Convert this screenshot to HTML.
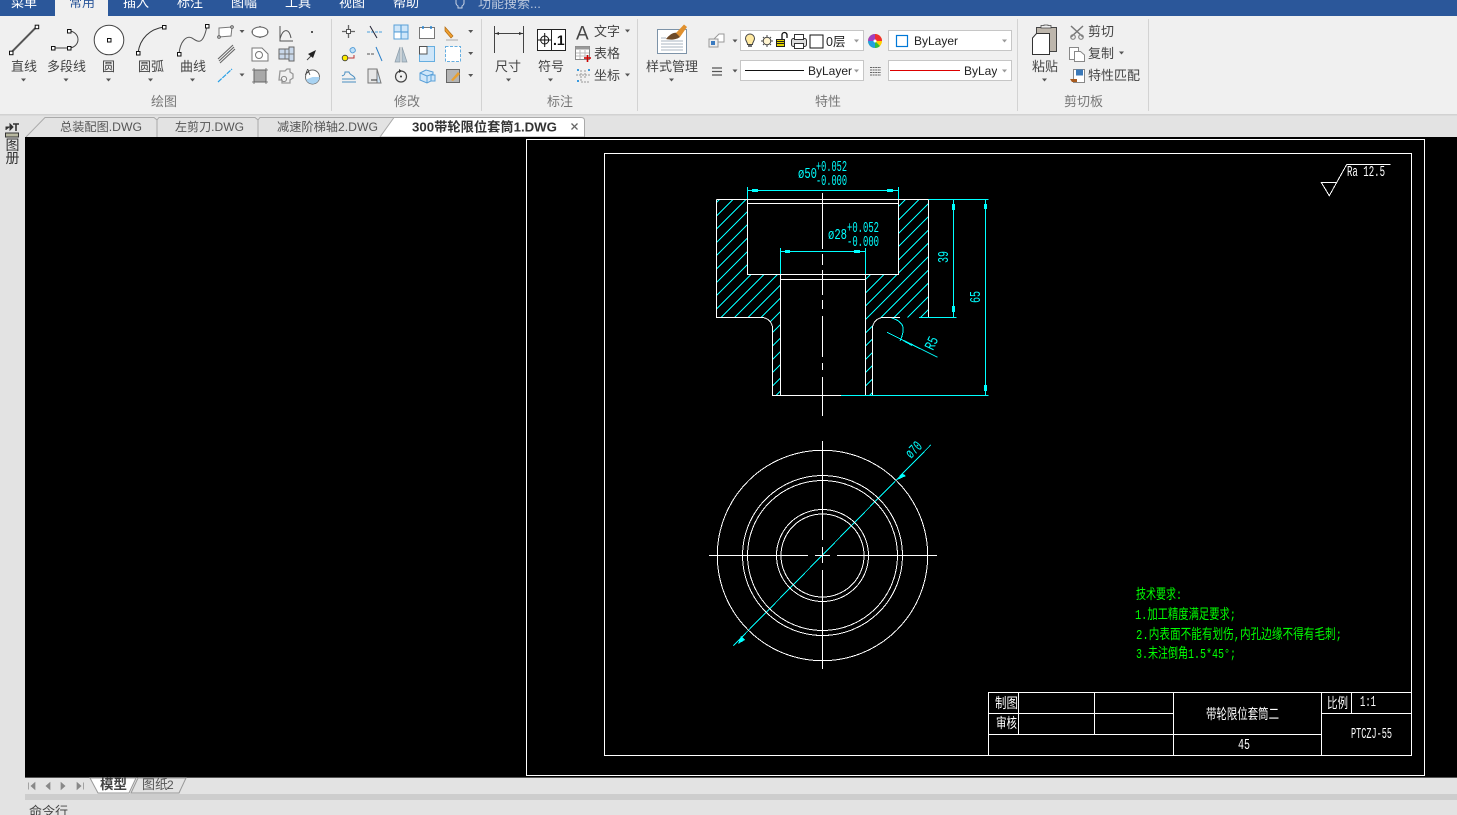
<!DOCTYPE html>
<html><head><meta charset="utf-8"><style>
html,body{margin:0;padding:0;background:#e3e3e3;overflow:hidden}
svg{display:block;position:absolute;left:0;top:0}
text{font-family:"Liberation Sans","Noto Sans CJK SC",sans-serif;font-size:13px;fill:#444}
.m{fill:#fff}
.l{fill:#777}
.c text{fill:#0ff;font-size:15px;font-family:"Liberation Mono",monospace}
.g text{fill:#0f0;font-size:14px;font-family:"Liberation Mono","Noto Sans CJK SC",monospace}
.w text{fill:#fff;font-size:14px}
.w text.n{font-family:"Liberation Mono",monospace;font-size:15px}
.i{fill:none;stroke:#555;stroke-width:1}
</style></head><body>
<svg width="1457" height="815" viewBox="0 0 1457 815" xmlns="http://www.w3.org/2000/svg">
<defs>
<path id="a" d="M-2.5-1.5h5l-2.500 3z" fill="#555"/>
<rect id="s" x="-1.500" y="-1.500" width="3.500" height="3.500" fill="#fff" stroke="#111"/>
<clipPath id="hc"><path d="M716.500 199.500H747.500V274.500H780.500V395.500H772.500V328A11 11 0 0 0 761.500 317.500H716.500ZM898.500 199.500H928.500V317.500H883.500A11 11 0 0 0 872.500 328V395.500H865.500V274.500H898.500Z"/></clipPath>
</defs>
<!-- base -->
<rect width="1457" height="815" fill="#e3e3e3"/>
<rect y="16" width="1457" height="98" fill="#f0f0f0"/>
<rect y="114" width="1457" height="1.500" fill="#d2d2d2"/>
<rect width="1457" height="16" fill="#2b579a"/>
<rect x="55" width="53" height="17" fill="#f0f0f0"/>
<g>
<text class="m" x="11" y="7">菜单</text>
<text x="69" y="7" style="fill:#2b579a">常用</text>
<text class="m" x="123" y="7">插入</text>
<text class="m" x="177" y="7">标注</text>
<text class="m" x="231" y="7">图幅</text>
<text class="m" x="285" y="7">工具</text>
<text class="m" x="339" y="7">视图</text>
<text class="m" x="393" y="7">帮助</text>
<text x="478" y="8" style="fill:#b9c6dc;font-size:13px">功能搜索...</text>
</g>
<path d="M456 0v2a4 4 0 0 0 2 4v2h4v-2a4 4 0 0 0 2-4v-2" fill="none" stroke="#c9d3e4"/>
<!-- separators -->
<path d="M331.500 19V111M481.500 19V111M637.500 19V111M1017.500 19V111M1148.500 19V111" stroke="#d3d3d3" stroke-width="1"/>
<!-- big draw icons -->
<path d="M11 52.700L36.700 26.700" stroke="#555" stroke-width="2"/>
<use href="#s" x="11" y="52.700"/><use href="#s" x="36.700" y="26.700"/>
<path d="M53 48H69M69 31A9 8.500 0 0 1 69 48" fill="none" stroke="#444"/>
<use href="#s" x="53" y="48"/><use href="#s" x="69" y="48"/><use href="#s" x="69" y="31"/>
<circle cx="109" cy="40" r="14.800" fill="#fff" stroke="#444"/><use href="#s" x="109" y="40"/>
<path d="M138 53C140 38 150 29 164 27" fill="none" stroke="#333"/>
<use href="#s" x="138" y="53"/><use href="#s" x="164" y="27"/>
<path d="M179 54C180 42 186 35 192 38C198 42 203 46 207 26" fill="none" stroke="#555"/>
<use href="#s" x="179" y="54"/><use href="#s" x="207" y="26"/>
<text x="11" y="71">直线</text><text x="47" y="71">多段线</text><text x="102" y="71">圆</text><text x="138" y="71">圆弧</text><text x="180" y="71">曲线</text>
<use href="#a" x="23.500" y="80"/><use href="#a" x="66" y="80"/><use href="#a" x="108.500" y="80"/><use href="#a" x="150.500" y="80"/><use href="#a" x="192.500" y="80"/>
<text class="l" x="151" y="106">绘图</text><text class="l" x="394" y="106">修改</text><text class="l" x="547" y="106">标注</text><text class="l" x="815" y="106">特性</text><text class="l" x="1064" y="106">剪切板</text>
<!-- draw small icons -->
<path d="M219 28L232 27L231 36L219 37Z" fill="#fff" stroke="#777"/><circle cx="219" cy="37" r="1.300" fill="#fff" stroke="#555"/><circle cx="232" cy="27" r="1.300" fill="#fff" stroke="#555"/>
<use href="#a" x="242" y="31.500"/>
<ellipse cx="260" cy="32" rx="8" ry="5" fill="#fff" stroke="#666"/><path d="M252 32h1M267 32h1M260 26v1M260 37v1" stroke="#444"/>
<path d="M280 26V41H293M280 39C283 28 289 28 291 38" class="i"/>
<rect x="311" y="31" width="2" height="2" fill="#555"/>
<path d="M218 59L233 45M219 61L234 47M220 63L235 49" stroke="#666" stroke-width="1.100"/>
<path d="M252 48H262L268 54V61H252Z" fill="#fff" stroke="#777"/><circle cx="259" cy="55" r="3.500" fill="#fff" stroke="#777"/>
<path d="M279 49H289V47H294V61H289V59H279Z" fill="#c9d8ea" stroke="#666"/><path d="M279 54H294M285 49V59M289 49V59" stroke="#777"/>
<path d="M307 60L313 54" stroke="#444"/><path d="M316 50L308 54L313 58Z" fill="#222"/>
<path d="M218 82L232 69" stroke="#2aa0e6" stroke-width="1.200" stroke-dasharray="5 1"/><use href="#a" x="242" y="75"/>
<rect x="254" y="70" width="12" height="12" fill="#a8a8a8" stroke="#666"/><path d="M252 70h16M252 82h16M254 68v16M266 68v16" stroke="#666" stroke-width=".8"/>
<path d="M280 71H285L287 69H290V72L293 74V78L290 80V83H282V80H279Z" fill="none" stroke="#999" stroke-width="1.300"/><circle cx="284" cy="79" r="2.600" fill="none" stroke="#888"/>
<circle cx="312.500" cy="77" r="7" fill="#fff" stroke="#666"/><path d="M312.500 77H319.500A7 7 0 0 1 306 79.500Z" fill="#a9d3f2"/><text x="305" y="75" style="font-size:8px;fill:#333">A</text>
<!-- modify icons -->
<rect x="346.500" y="29.500" width="4" height="4" fill="#fff" stroke="#555"/><path d="M342 31.500h4M351 31.500h4M348.500 25v4M348.500 34v4" stroke="#666" stroke-width="1.300"/>
<path d="M367 32H383" stroke="#4a9fdc" stroke-dasharray="3 1"/><path d="M370 26L377 38" stroke="#223"/>
<rect x="394" y="25" width="14" height="14" fill="#cfe6f9" stroke="#5aa0d8"/><path d="M401 25V39M394 32H408" stroke="#5aa0d8" stroke-width="1.200"/><rect x="394.500" y="32.500" width="6" height="6" fill="#fff"/>
<rect x="419.500" y="27.500" width="15" height="11" fill="#fff" stroke="#777"/><path d="M423 26v3M431 26v3" stroke="#2a8ad8" stroke-width="1.500"/>
<path d="M445 27L453 36L451 38L445 31Z" fill="#f0a030" stroke="#b06a10" stroke-width=".7"/><path d="M446 40H458" stroke="#aaa"/>
<use href="#a" x="470.700" y="31.500"/>
<rect x="350" y="48" width="5" height="5" rx="2" fill="#bfe0f8" stroke="#5aa0d8" transform="rotate(-30 352 50)"/><circle cx="345" cy="58" r="2.800" fill="#ffee00" stroke="#333" stroke-width=".8"/><path d="M348 58H354V55" fill="none" stroke="#b33"/>
<path d="M367 54H374" stroke="#555" stroke-dasharray="3 1"/><path d="M376 47L382 61" stroke="#2a7fc8"/>
<path d="M400 47V62H395ZM402 47L407 62H402Z" fill="#b6c6d2" stroke="#8a9aa6" stroke-width=".7"/>
<rect x="419.500" y="46.500" width="15" height="15" fill="#cfe6f9" stroke="#66aee0"/><rect x="419.500" y="46.500" width="7.500" height="7.500" fill="#fff" stroke="#555"/>
<rect x="445.500" y="46.500" width="15" height="15" fill="#fff" stroke="#66aee0" stroke-dasharray="3 1.500"/><use href="#a" x="470.700" y="53.500"/>
<path d="M342 79H355C355 75 350 76 349 72H345C345 76 343 75 342 76M342 82H356" fill="none" stroke="#4a8ec0"/>
<path d="M368 69H377L381 83H368Z" fill="#cfe6f9" stroke="#777"/><rect x="368" y="69" width="9" height="14" fill="#e6e6e6" stroke="#777"/><path d="M371 80H377" stroke="#333"/>
<circle cx="401" cy="76.500" r="5.500" fill="none" stroke="#444" stroke-width="1.200"/><circle cx="401" cy="76.500" r="1" fill="#333"/><path d="M399 69L402 71L399 73" fill="#333"/>
<path d="M420 73L426 70L433 72V80L427 83L420 80ZM420 73L427 76V83M427 76L433 74" fill="#cfe6f9" stroke="#5aa0d8"/><rect x="431" y="75" width="4" height="6" fill="#cfe6f9" stroke="#5aa0d8"/>
<rect x="446.500" y="69.500" width="13" height="13" fill="#b4b4b4" stroke="#666"/><path d="M451 80L458 72L460 74L453 81Z" fill="#e8a030"/><use href="#a" x="470.700" y="75.500"/>
<!-- annotation -->
<path d="M494.500 26V53M523.500 26V53M495 33.500H523" stroke="#444"/><path d="M495 33.500l4-1.500v3zM523 33.500l-4-1.500v3z" fill="#333"/>
<rect x="537.500" y="29.500" width="28" height="21" fill="#fff" stroke="#222"/><path d="M551.500 30V50" stroke="#222"/><circle cx="544.700" cy="40" r="4" fill="none" stroke="#111"/><path d="M538 40H551M544.700 33V47" stroke="#111"/><text x="553" y="45" style="font-size:14px;font-weight:bold;fill:#111">.1</text>
<text x="495" y="71">尺寸</text><text x="538" y="71">符号</text>
<use href="#a" x="508.500" y="80"/><use href="#a" x="550.500" y="80"/>
<text x="576" y="39.500" style="font-size:19px;fill:#444">A</text>
<rect x="575.500" y="46.500" width="14" height="13" fill="#fff" stroke="#888"/><rect x="575.500" y="46.500" width="14" height="3" fill="#999"/><path d="M580 50v9M585 50v9M576 53h13M576 56h13" stroke="#bbb"/><path d="M584 58h7M587.500 55v7" stroke="#c00" stroke-width="1.600"/>
<path d="M581 70V82H590M576 75H590M585 70V79" fill="none" stroke="#999" stroke-dasharray="2 1"/><path d="M577 70h2M588 70h2M577 81h2" stroke="#3a9ade" stroke-width="2"/>
<text x="594" y="36">文字</text><text x="594" y="58">表格</text><text x="594" y="80">坐标</text>
<use href="#a" x="627.500" y="31"/><use href="#a" x="627.500" y="75"/>
<!-- style manager -->
<rect x="657.500" y="29.500" width="29" height="24" fill="#fff" stroke="#7d93a8"/><path d="M661 38h5M661 41h22M661 44h22M661 47h22M661 50h22" stroke="#aab6c2"/>
<path d="M666 39C670 34 674 32 677 33L680 37C676 40 670 40 666 39Z" fill="#6e4a28"/><path d="M676 33L684 24.500L687 27L680 37Z" fill="#e0902e"/>
<text x="646" y="71">样式管理</text><use href="#a" x="671.500" y="80"/>
<!-- properties -->
<path d="M713 40L719 34H724V42H718Z" fill="#fff" stroke="#999"/><rect x="709" y="39" width="9" height="8" fill="#eee" stroke="#999"/><rect x="711" y="41" width="4" height="4" fill="#3a7ac0"/>
<use href="#a" x="735" y="41"/>
<path d="M712 68h10M712 71.500h10M712 75h10" stroke="#555" stroke-width="1.200"/><use href="#a" x="735" y="71"/>
<rect x="740.500" y="30.500" width="123" height="20" fill="#fff" stroke="#c6c6c6"/>
<rect x="740.500" y="60.500" width="123" height="20" fill="#fff" stroke="#c6c6c6"/>
<rect x="888.500" y="30.500" width="123" height="20" fill="#fff" stroke="#c6c6c6"/>
<rect x="888.500" y="60.500" width="123" height="20" fill="#fff" stroke="#c6c6c6"/>
<path d="M750 34a4.500 4.500 0 0 1 4.500 4.500c0 2.500-2 3.500-2 6h-5c0-2.500-2-3.500-2-6A4.500 4.500 0 0 1 750 34Z" fill="#ffe9a0" stroke="#444"/><path d="M748 46h4" stroke="#444" stroke-width="1.500"/>
<circle cx="767" cy="41" r="3.800" fill="#fff4d0" stroke="#444"/><path d="M761 41h2M771 41h2M767 35v2M767 45v2M763 37l1 1M771 37l-1 1M763 45l1-1M771 45l-1-1" stroke="#444"/>
<rect x="776.500" y="39.500" width="8" height="7" fill="#e4d400" stroke="#222"/><path d="M777 41.500h7M777 43.500h7" stroke="#222"/><path d="M782 39V35a2.500 2.500 0 0 1 5 0v3" fill="none" stroke="#111" stroke-width="1.300"/>
<rect x="791.500" y="38.500" width="15" height="8" rx="2" fill="#ddd" stroke="#333"/><rect x="794.500" y="34.500" width="9" height="5" fill="#fff" stroke="#333"/><rect x="794.500" y="43.500" width="9" height="5" fill="#fff" stroke="#333"/>
<rect x="810" y="35" width="13" height="13" fill="#fff" stroke="#111"/>
<text x="826" y="46" style="fill:#222;font-size:12.500px">0层</text><use href="#a" x="856.500" y="41" style="opacity:.6"/>
<circle cx="875" cy="41" r="7" fill="#ffd000"/><path d="M875 41V34A7 7 0 0 0 868 41Z" fill="#a040c0"/><path d="M875 41V34A7 7 0 0 1 882 41Z" fill="#f03030"/><path d="M875 41H868A7 7 0 0 0 875 48Z" fill="#20a0e0"/><path d="M875 41V48A7 7 0 0 0 880 46Z" fill="#30c040"/><circle cx="875" cy="41" r="1.500" fill="#fff"/>
<rect x="896.500" y="35.500" width="11" height="11" fill="#fff" stroke="#0078d7" stroke-width="1.200"/>
<text x="914" y="45" style="font-size:12px;fill:#222">ByLayer</text><use href="#a" x="1004.500" y="41" style="opacity:.6"/>
<path d="M745 70.500H804" stroke="#111"/><text x="808" y="75" style="font-size:12px;fill:#222">ByLayer</text><use href="#a" x="856.500" y="71" style="opacity:.6"/>
<path d="M870 67.500h11M870 70h11M870 72.500h11M870 75h11" stroke="#666" stroke-dasharray="2 .6"/>
<path d="M890 70.500H960" stroke="#dd0000"/>
<svg x="964" y="60" width="33" height="21"><text x="0" y="15" style="font-size:12px;fill:#222">ByLayer</text></svg>
<use href="#a" x="1004.500" y="71" style="opacity:.6"/>
<!-- clipboard -->
<rect x="1036.500" y="27.500" width="20" height="24" fill="#bdb6ac" stroke="#444"/><path d="M1041 27V25.500h3V25h4v.5h3V28h-10Z" fill="#eee" stroke="#444" stroke-width=".8"/>
<path d="M1032.500 38L1036.500 33.500H1049.500V54.500H1032.500Z" fill="#fff" stroke="#333"/>
<text x="1032" y="71">粘贴</text><use href="#a" x="1044.500" y="80"/>
<path d="M1071 26L1083 37M1083 26L1071 37" stroke="#777" stroke-width="1.500"/><circle cx="1073" cy="37" r="2.300" fill="none" stroke="#888" stroke-width="1.200"/><circle cx="1081" cy="37" r="2.300" fill="none" stroke="#888" stroke-width="1.200"/>
<rect x="1069.500" y="47.500" width="9" height="12" fill="#fff" stroke="#888"/><path d="M1074.500 51.500H1080.500L1084.500 55V61.500H1074.500Z" fill="#fff" stroke="#888"/>
<rect x="1073.500" y="69.500" width="11" height="13" fill="#fff" stroke="#888"/><rect x="1076" y="69.500" width="7" height="6" fill="#3a78b8"/><path d="M1070 79h7v3h-5z" fill="#a85a1e"/>
<text x="1088" y="36">剪切</text><text x="1088" y="58">复制</text><text x="1088" y="80">特性匹配</text><use href="#a" x="1121.500" y="53"/>
<!-- tabs -->
<path d="M26 137L45 117.500H154L157 120V137" fill="#e3e3e3" stroke="#aaa"/>
<path d="M157 137V120L159 117.500H255L258 120V137" fill="#e3e3e3" stroke="#aaa"/>
<path d="M258 137V120L260 117.500H396" fill="#e3e3e3" stroke="#aaa"/>
<path d="M380 137L394 117.500H581Q584.500 117.500 584.500 120.500V137Z" fill="#fff" stroke="#aaa"/>
<text x="60" y="131" style="font-size:12px;fill:#555" textLength="82" lengthAdjust="spacingAndGlyphs">总装配图.DWG</text>
<text x="175" y="131" style="font-size:12px;fill:#555" textLength="69" lengthAdjust="spacingAndGlyphs">左剪刀.DWG</text>
<text x="277" y="131" style="font-size:12px;fill:#555" textLength="101" lengthAdjust="spacingAndGlyphs">减速阶梯轴2.DWG</text>
<text x="412" y="131.500" style="font-size:13px;font-weight:bold;fill:#333" textLength="145" lengthAdjust="spacingAndGlyphs">300带轮限位套筒1.DWG</text>
<path d="M571.500 123.500L577.500 129.500M577.500 123.500L571.500 129.500" stroke="#666" stroke-width="1.300"/>
<!-- left strip -->
<path d="M6 130V127H10M10 124L13 127L10 130Z" fill="#333" stroke="#333"/><path d="M13 124H19M16 124V131" stroke="#333" stroke-width="1.600"/><rect x="5.500" y="133" width="13" height="4" fill="#b8b8a0" stroke="#333"/>
<text x="5.500" y="150" style="font-size:14px;fill:#333">图</text><text x="5.500" y="163" style="font-size:14px;fill:#333">册</text>
<!-- canvas -->
<rect x="25" y="137" width="1432" height="640" fill="#000"/>
<g shape-rendering="crispEdges" fill="none" stroke="#fff">
<rect x="526.500" y="139.500" width="898" height="636"/>
<rect x="604.500" y="153.500" width="807" height="602"/>
<!-- title block -->
<rect x="988.500" y="692.500" width="423" height="63"/>
<path d="M988.500 713.500H1173.500M988.500 734.500H1321.500M1321.500 713.500H1411.500M1018.500 692.500V734.500M1094.500 692.500V734.500M1173.500 692.500V755.500M1321.500 692.500V755.500M1351.500 692.500V713.500"/>
<!-- hatch -->
<g clip-path="url(#hc)"><path stroke="#0ff" d="M919 0l-500 500M932.300 0l-500 500M945.600 0l-500 500M958.900 0l-500 500M972.200 0l-500 500M985.500 0l-500 500M998.800 0l-500 500M1012.100 0l-500 500M1025.400 0l-500 500M1038.700 0l-500 500M1052 0l-500 500M1065.300 0l-500 500M1078.600 0l-500 500M1091.900 0l-500 500M1105.200 0l-500 500M1118.500 0l-500 500M1131.800 0l-500 500M1145.100 0l-500 500M1158.400 0l-500 500M1171.700 0l-500 500M1185 0l-500 500M1198.300 0l-500 500M1211.600 0l-500 500M1224.900 0l-500 500M1238.200 0l-500 500M1251.500 0l-500 500M1264.800 0l-500 500M1278.100 0l-500 500M1291.400 0l-500 500M1304.700 0l-500 500"/></g>
<!-- section -->
<path d="M716.500 199.500H928.500V317.500H919M883.500 317.500H900M716.500 199.500V317.500H761.500M772.500 328V395.500H841M747.500 199.500V274.500H898.500V199.500M747.500 203.500H898.500M780.500 274.500V395.500M865.500 274.500V395.500M780.500 279.500H865.500M872.500 328V395.500"/>
<path d="M761.500 317.500A11 11 0 0 1 772.500 328M872.500 328A11 11 0 0 1 883.500 317.500"/>
<path d="M822.500 193V249M822.500 254V265M822.500 270V295M822.500 300V309M822.500 316V357M822.500 363V370M822.500 377V416"/>
<!-- cyan dims -->
<g stroke="#0ff">
<path d="M747.500 187V199M898.500 187V199M747.500 190.500H898.500M780.500 248V274M865.500 248V274M780.500 251.500H865.500"/>
<path d="M928.500 199.500H988.500M919 317.500H956.500M841 395.500H988.500M953.500 199.500V317.500M985.500 199.500V395.500"/>
</g>
<g fill="#0ff" stroke="none">
<rect x="752" y="189" width="6" height="3"/><rect x="887" y="189" width="6" height="3"/>
<rect x="785" y="250" width="5" height="3"/><rect x="854" y="250" width="6" height="3"/>
<rect x="952" y="204" width="3" height="6"/><rect x="952" y="306" width="3" height="6"/>
<rect x="984" y="204" width="3" height="5"/><rect x="984" y="385" width="3" height="6"/>
</g>
<path stroke="#0ff" d="M887 332.300L937.700 357.300M891.700 318Q905 322 903 332Q902 337 900 341M733.300 645.700L930.700 445"/>
<path fill="#0ff" stroke="none" d="M903 341L913 344L912 346ZM902 473L906 476L897 480ZM741 636L745 640L738 644Z"/>
<!-- circles -->
<circle cx="822.500" cy="555.500" r="105.200"/>
<circle cx="822.500" cy="555.500" r="80"/>
<circle cx="822.500" cy="555.500" r="75"/>
<circle cx="822.500" cy="555.500" r="46"/>
<circle cx="822.500" cy="555.500" r="41.500"/>
<path d="M709 555.500H808M815 555.500H830M837 555.500H937M822.500 441V540M822.500 547V563M822.500 570V669"/>
<!-- roughness -->
<path d="M1390.700 164.500H1346.700L1329.300 195.700L1321.300 182.500H1336.700"/>
</g>
<!-- CAD text -->
<g class="c">
<text x="798" y="178" textLength="19" lengthAdjust="spacingAndGlyphs">ø50</text>
<text x="816" y="171" textLength="31" lengthAdjust="spacingAndGlyphs">+0.052</text>
<text x="816" y="185" textLength="31" lengthAdjust="spacingAndGlyphs">-0.000</text>
<text x="828" y="239" textLength="19" lengthAdjust="spacingAndGlyphs">ø28</text>
<text x="847" y="232" textLength="32" lengthAdjust="spacingAndGlyphs">+0.052</text>
<text x="847" y="246" textLength="32" lengthAdjust="spacingAndGlyphs">-0.000</text>
<text transform="translate(948,263) rotate(-90)" textLength="12" lengthAdjust="spacingAndGlyphs">39</text>
<text transform="translate(980,303) rotate(-90)" textLength="12" lengthAdjust="spacingAndGlyphs">65</text>
<text transform="translate(933,351) rotate(-65)" textLength="13" lengthAdjust="spacingAndGlyphs">R5</text>
<text transform="translate(911,459) rotate(-45)" textLength="17" lengthAdjust="spacingAndGlyphs">ø70</text>
</g>
<g class="w">
<text class="n" x="1347" y="176" textLength="38" lengthAdjust="spacingAndGlyphs">Ra 12.5</text>
<text x="995" y="708" textLength="23" lengthAdjust="spacingAndGlyphs">制图</text>
<text x="996" y="728" textLength="21" lengthAdjust="spacingAndGlyphs">审核</text>
<text x="1327" y="708" textLength="21" lengthAdjust="spacingAndGlyphs">比例</text>
<text class="n" x="1360" y="706" textLength="16" lengthAdjust="spacingAndGlyphs">1:1</text>
<text x="1206" y="719" textLength="73" lengthAdjust="spacingAndGlyphs">带轮限位套筒二</text>
<text class="n" x="1238" y="749" textLength="12" lengthAdjust="spacingAndGlyphs">45</text>
<text class="n" x="1351" y="738" textLength="41" lengthAdjust="spacingAndGlyphs">PTCZJ-55</text>
</g>
<g class="g">
<text x="1136" y="599" textLength="46" lengthAdjust="spacingAndGlyphs">技术要求:</text>
<text x="1135" y="619" textLength="101" lengthAdjust="spacingAndGlyphs">1.加工精度满足要求;</text>
<text x="1136" y="639" textLength="206" lengthAdjust="spacingAndGlyphs">2.内表面不能有划伤,内孔边缘不得有毛刺;</text>
<text x="1136" y="658" textLength="100" lengthAdjust="spacingAndGlyphs">3.未注倒角1.5*45°;</text>
</g>
<!-- bottom -->
<rect x="25" y="777" width="1432" height="1" fill="#555"/>
<rect x="25" y="794" width="1432" height="6" fill="#cdcdcd"/>
<path d="M28.500 782.500v7M35 782.500l-4 3.500 4 3.500zM50 782.500l-4 3.500 4 3.500zM61 782.500l4 3.500-4 3.500zM77 782.500l4 3.500-4 3.500zM83.500 782.500v7" fill="#888" stroke="#888" stroke-width=".7"/>
<path d="M90 778L98 793H129L136 778Z" fill="#fff" stroke="#999"/>
<path d="M131 793L138 778H186L179 793Z" fill="#e3e3e3" stroke="#999"/>
<text x="100" y="789" style="font-weight:bold;fill:#444;font-size:13.500px">模型</text>
<text x="142" y="789" style="fill:#555">图纸</text><text x="167" y="789" style="fill:#555;font-size:12px">2</text>
<text x="29" y="816" style="fill:#444">命令行</text>
</svg>
</body></html>
